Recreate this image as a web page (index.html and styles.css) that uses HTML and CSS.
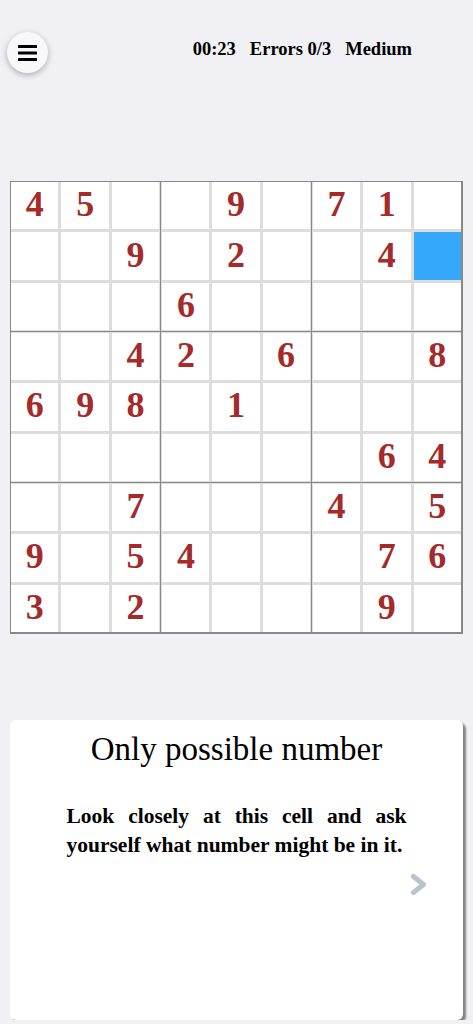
FILE: index.html
```html
<!DOCTYPE html>
<html lang="en">

<head>
    <meta charset="UTF-8">
    <meta name="viewport" content="width=device-width, initial-scale=1.0">
    <title>Sudoku</title>
    <link rel="stylesheet" href="styles.css">
</head>

<body>
    <header class="header">
        <button type="button" class="menu-button" aria-label="Menu">
            <svg width="19" height="16" viewBox="0 0 19 16">
                <rect x="0" y="0" width="19" height="3" rx="0.5" fill="#000"/>
                <rect x="0" y="6.5" width="19" height="3" rx="0.5" fill="#000"/>
                <rect x="0" y="13" width="19" height="3" rx="0.5" fill="#000"/>
            </svg>
        </button>
        <div class="stats">
            <span id="timer">00:23</span>
            <span id="errors">Errors 0/3</span>
            <span id="level">Medium</span>
        </div>
    </header>

    <main class="main">
        <div class="board" id="board"></div>

        <section class="hint-card">
            <h2 class="hint-title">Only possible number</h2>
            <p class="hint-text">Look closely at this cell and ask yourself what number might be in it.</p>
            <div class="hint-nav">
                <button type="button" class="next-button" aria-label="Next hint">
                    <svg width="17" height="23" viewBox="0 0 17 23">
                        <polyline points="3.5,3.5 13.5,11.5 3.5,19.5" fill="none" stroke="#b8c3cb" stroke-width="5" stroke-linecap="round" stroke-linejoin="round"/>
                    </svg>
                </button>
            </div>
        </section>
    </main>

    <script>
        // '.' marks an empty cell
        const puzzle = [
            '45..9.71.',
            '..9.2..4.',
            '...6.....',
            '..42.6..8',
            '698.1....',
            '.......64',
            '..7...4.5',
            '9.54...76',
            '3.2....9.'
        ];
        const selected = { row: 1, col: 8 };

        function renderBoard() {
            const boardEl = document.getElementById('board');

            // the board is built box by box, so each 3x3 box gets its own frame
            for (let b = 0; b < 9; b++) {
                const boxEl = document.createElement('div');
                boxEl.classList.add('box');

                for (let c = 0; c < 9; c++) {
                    const row = Math.floor(b / 3) * 3 + Math.floor(c / 3);
                    const col = (b % 3) * 3 + (c % 3);
                    const value = puzzle[row][col];

                    const cellEl = document.createElement('div');
                    cellEl.classList.add('cell');
                    if (value !== '.') {
                        cellEl.innerText = value;
                    }
                    if (row === selected.row && col === selected.col) {
                        cellEl.classList.add('selected');
                    }
                    boxEl.appendChild(cellEl);
                }

                boardEl.appendChild(boxEl);
            }
        }

        renderBoard();
    </script>
</body>

</html>
```

FILE: styles.css
```css
body {
    margin: 0;
    padding: 0;
    background-color: #f0f0f5;
    font-family: 'Liberation Serif', 'Times New Roman', serif;
    color: #000;
}

.header {
    display: flex;
    align-items: flex-start;
    height: 41px;
    padding: 32px 61px 0 7px;
}

.menu-button {
    width: 41px;
    height: 41px;
    padding: 0;
    border: none;
    border-radius: 50%;
    background-color: #f8f8fb;
    box-shadow: 0 2px 6px rgba(0, 0, 0, 0.28);
    display: flex;
    align-items: center;
    justify-content: center;
    cursor: pointer;
}

.stats {
    margin-left: auto;
    margin-top: 6.5px;
    display: flex;
    gap: 14px;
    font-size: 18.5px;
    font-weight: bold;
}

.main {
    padding: 0 10px;
}

.board {
    margin-top: 108px;
    height: 453px;
    box-sizing: border-box;
    display: grid;
    grid-template-columns: repeat(3, 1fr);
    grid-template-rows: repeat(3, 1fr);
    gap: 1px;
    background-color: #888;
    border-style: solid;
    border-color: #888;
    border-width: 1px 2px 2px 1px;
}

.box {
    display: grid;
    grid-template-columns: repeat(3, 1fr);
    grid-template-rows: repeat(3, 1fr);
    gap: 3px;
    background-color: #ddd;
}

/* light edge next to the dark box lines, none on the outer frame */
.box:nth-child(3n+1) {
    padding-right: 1px;
}

.box:nth-child(3n+2) {
    padding-left: 1px;
    padding-right: 1px;
}

.box:nth-child(3n) {
    padding-left: 1px;
}

.box:nth-child(-n+3) {
    padding-bottom: 1px;
}

.box:nth-child(n+4):nth-child(-n+6) {
    padding-top: 1px;
    padding-bottom: 1px;
}

.box:nth-child(n+7) {
    padding-top: 1px;
}

.cell {
    background-color: #fff;
    display: flex;
    align-items: center;
    justify-content: center;
    font-size: 36px;
    font-weight: bold;
    line-height: 1;
    color: #a52a2a;
    padding-bottom: 3px;
}

.cell.selected {
    background-color: #35a8fc;
}

.hint-card {
    margin-top: 86px;
    height: 300px;
    box-sizing: border-box;
    padding-top: 11px;
    background-color: #fff;
    border-radius: 6px;
    box-shadow: 3px 3px 2px rgba(0, 0, 0, 0.45);
}

.hint-title {
    margin: 0;
    font-size: 33px;
    font-weight: normal;
    text-align: center;
}

.hint-text {
    width: 340px;
    margin: 33.5px auto 0;
    font-size: 21.5px;
    font-weight: bold;
    line-height: 29px;
    text-align: justify;
}

.hint-nav {
    display: flex;
    justify-content: flex-end;
    margin-top: 13px;
    padding-right: 36px;
}

.next-button {
    padding: 0;
    border: none;
    background: none;
    display: flex;
    cursor: pointer;
}
```
